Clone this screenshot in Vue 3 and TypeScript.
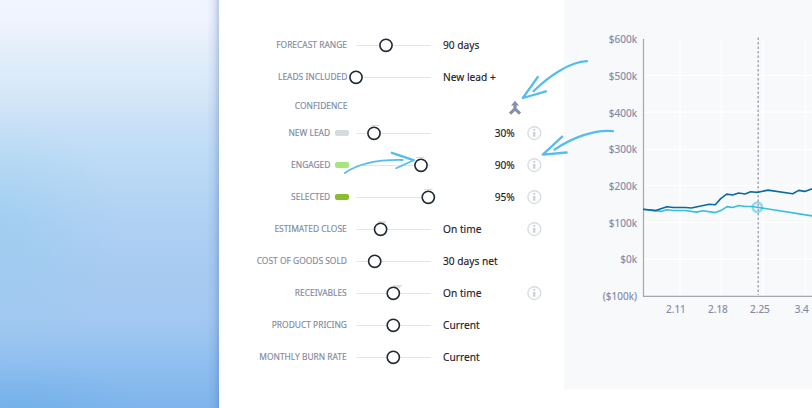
<script setup lang="ts">
interface Setting {
  label: string
  value?: string
  thumb?: number
  tone?: 'gray' | 'lime' | 'green'
  percent?: boolean
  info?: boolean
  ghost?: 'bar' | 'wedge'
  ghostX?: number
}

const settings: Setting[] = [
  { label: 'FORECAST RANGE', value: '90 days', thumb: 30 },
  { label: 'LEADS INCLUDED', value: 'New lead +', thumb: 0 },
  { label: 'CONFIDENCE' },
  { label: 'NEW LEAD', value: '30%', thumb: 18, tone: 'gray', percent: true, info: true, ghost: 'bar', ghostX: 19 },
  { label: 'ENGAGED', value: '90%', thumb: 65, tone: 'lime', percent: true, info: true, ghost: 'bar', ghostX: 64 },
  { label: 'SELECTED', value: '95%', thumb: 72.3, tone: 'green', percent: true, info: true, ghost: 'bar', ghostX: 72.5 },
  { label: 'ESTIMATED CLOSE', value: 'On time', thumb: 24.6, info: true, ghost: 'wedge', ghostX: 27 },
  { label: 'COST OF GOODS SOLD', value: '30 days net', thumb: 18.7 },
  { label: 'RECEIVABLES', value: 'On time', thumb: 37.3, info: true, ghost: 'wedge', ghostX: 42.5 },
  { label: 'PRODUCT PRICING', value: 'Current', thumb: 37.3 },
  { label: 'MONTHLY BURN RATE', value: 'Current', thumb: 37.3 },
]

const yTicks = ['$600k', '$500k', '$400k', '$300k', '$200k', '$100k', '$0k', '($100k)']
const xTicks = ['2.11', '2.18', '2.25', '3.4']
const gridX = [37, 78.3, 120, 162.2]
const gridY = [36.5, 73.2, 110.4, 146.5, 183.5, 220.2]

const upper =
  '0,170.2 12.7,171.6 24,167.8 30.3,168.5 42.3,168.5 48.3,169 66.3,165.2 72.3,165.8 77.7,159.6 83.7,155.1 89.7,156 95.7,154 102,155 107.7,152.8 114.3,153.4 125,151.1 149.7,154.7 155.7,151.4 161.7,152.4 170,149.6'
const lower =
  '0,170.2 18,172.4 23.7,170.7 30.3,171.5 42.3,171.5 53.7,173.1 59.7,171.8 72.3,173.6 78,171.6 84,167.6 89.7,168.5 95.7,166.5 102,167.5 109,167.5 114.3,168.3 170,177'
</script>

<template>
  <div class="page">
    <aside class="sky"></aside>

    <section class="settings">
      <div v-for="s in settings" :key="s.label" class="row" :class="{ heading: s.thumb === undefined }">
        <div class="label" :class="{ tagged: s.tone }">
          <span class="name">{{ s.label }}</span>
          <i v-if="s.tone" class="chip" :class="s.tone"></i>
        </div>
        <svg v-if="s.thumb !== undefined" class="slider" width="91" height="20" viewBox="-8 -10 91 20">
          <path class="track" d="M0 .5H75" />
          <path v-if="s.ghost === 'bar'" class="ghost" :d="`M${s.ghostX! - 4} -7.5h8`" />
          <path v-if="s.ghost === 'wedge'" class="wedge" :d="`M${s.ghostX! - 5} -8h9l-3 3h-6z`" />
          <circle class="thumb" :cx="s.thumb" cy=".3" r="6.1" />
        </svg>
        <div v-if="s.value" class="value" :class="{ percent: s.percent }"><span>{{ s.value }}</span></div>
        <svg v-if="s.info" class="info" width="16" height="16" viewBox="0 0 16 16">
          <circle cx="8.3" cy="8.1" r="6.4" />
          <path d="M7.3 4.1h2v2h-2zM6.9 7.1h2.6v4.6H6.9z" />
        </svg>
        <svg v-if="s.thumb === undefined" class="merge" width="14" height="16" viewBox="0 0 14 16">
          <path d="M7 .8 11 5.4H8.6V8.2L13.1 12.4 10.9 14.7 7 11 3.1 14.7.9 12.4 5.4 8.2V5.4H3z" />
        </svg>
      </div>
    </section>

    <section class="chart">
      <div class="y-axis">
        <div v-for="t in yTicks" :key="t" class="tick"><span>{{ t }}</span></div>
      </div>
      <div class="plot-area">
        <svg class="plot" width="170" height="262" viewBox="-1 -3 170 262">
          <path v-for="x in gridX" :key="'x' + x" class="grid" :d="`M${x} 0V257`" />
          <path v-for="y in gridY" :key="'y' + y" class="grid" :d="`M0 ${y}H170`" />
          <path class="axis" d="M.5 0V257.4H170" />
          <path class="marker" d="M115.2 -1.5V256" />
          <polyline class="lower" :points="lower" />
          <polyline class="upper" :points="upper" />
          <circle class="dot" cx="114.4" cy="168.3" r="4.7" />
        </svg>
        <div class="x-axis">
          <div v-for="t in xTicks" :key="t" class="x-tick"><span>{{ t }}</span></div>
        </div>
      </div>
    </section>

    <svg class="notes" width="812" height="408" viewBox="0 0 812 408">
      <path d="M587 61.2C570 62 550 75 533.5 91.2" />
      <path d="M537.8 77 522.8 98 546 91.4" />
      <path d="M613 131.1C595 129 572 138 554.5 149.6" />
      <path d="M562.2 136.6 542.8 154.6 566.6 152.5" />
      <path class="thin" d="M344.8 173C358 164 379 159.5 402.6 160" />
      <path d="M391.8 152.8 413.6 160.2" />
      <path class="thin" d="M413.6 160.2 396.2 168.2" />
    </svg>
  </div>
</template>

<style>
body {
  margin: 0;
  background: #fff;
}
</style>

<style scoped>
.page {
  position: relative;
  display: flex;
  width: 812px;
  height: 408px;
  overflow: hidden;
  background: #fff;
  font-family: 'Noto Sans', 'Open Sans', sans-serif;
}
.sky {
  width: 219px;
  flex: none;
  background:
    linear-gradient(to left, rgba(70, 105, 180, 0.32), rgba(70, 105, 180, 0.1) 5px, transparent 12px),
    linear-gradient(to bottom, #f1f5ff 0, rgba(241, 245, 255, 0) 45px),
    radial-gradient(ellipse 120px 120px at 0 230px, rgba(130, 200, 235, 0.32), rgba(130, 200, 235, 0.12) 55%, rgba(130, 200, 235, 0)),
    radial-gradient(ellipse 130px 45px at 20px 408px, rgba(100, 172, 228, 0.4), rgba(100, 172, 228, 0)),
    linear-gradient(to bottom, #f0f5ff 0, #e8f0fb 35px, #d9eaf8 82px, #c9e0f7 125px, #bbdaf5 165px, #b0d1f3 220px, #a8cbf2 270px, #a3c8f1 320px, #91c0f0 358px, #7fb5ec 408px);
}
.settings {
  width: 345px;
  flex: none;
  box-sizing: border-box;
  padding-top: 29px;
}
.row {
  display: grid;
  grid-template-columns: 130px 91px 76px 16px;
  height: 32px;
  align-items: center;
}
.row.heading {
  height: 24px;
}
.label {
  display: flex;
  align-items: center;
  justify-content: flex-end;
  gap: 4px;
  color: #7f899f;
  font-size: 9.5px;
  line-height: 14px;
  white-space: nowrap;
  -webkit-text-stroke: 0.15px #7f899f;
}
.name {
  display: inline-block;
  margin-right: 2px;
  transform: translateY(0.4px) scaleX(0.885);
  transform-origin: right center;
}
.heading .name {
  transform: translateY(1px) scaleX(0.885);
}
.tagged .name {
  margin-right: 0.5px;
}
.chip {
  width: 14px;
  height: 6px;
  border-radius: 2px;
}
.gray {
  background: #d5d9e0;
}
.lime {
  background: #a4e67c;
}
.green {
  background: #88bd2c;
}
.slider {
  display: block;
  margin-left: -1px;
  overflow: visible;
}
.track {
  stroke: #e1e4ea;
  stroke-width: 1.2;
}
.ghost {
  stroke: #d6d9e2;
  stroke-width: 1;
}
.wedge {
  fill: #dcdfe9;
}
.thumb {
  fill: #fff;
  stroke: #202936;
  stroke-width: 1.6;
}
.value {
  padding-left: 3px;
  color: #1f2023;
  font-size: 11px;
  line-height: 16px;
  white-space: nowrap;
  -webkit-text-stroke: 0.15px #1f2023;
}
.value span {
  display: inline-block;
  transform: translateY(0.4px) scaleX(0.925);
  transform-origin: left center;
}
.value.percent {
  padding: 0 1px 0 0;
  text-align: right;
}
.value.percent span {
  transform-origin: right center;
}
.info {
  margin-left: 10px;
}
.info circle {
  fill: none;
  stroke: #d9dce5;
  stroke-width: 1.4;
}
.info path {
  fill: #cfd3de;
}
.merge {
  grid-column: 3;
  justify-self: end;
  margin-top: 6px;
  margin-right: -6px;
}
.merge path {
  fill: #8790ab;
}
.chart {
  display: flex;
  width: 248px;
  height: 389px;
  flex: none;
  background: #f8f9fb;
}
.y-axis {
  display: grid;
  grid-template-rows: repeat(8, 36.7px);
  width: 73px;
  padding-top: 20.5px;
  color: #838ba8;
  font-size: 11px;
  text-align: right;
  flex: none;
  -webkit-text-stroke: 0.15px #838ba8;
}
.tick {
  display: grid;
  align-items: center;
}
.tick span {
  transform: scaleX(0.91);
  transform-origin: right center;
}
.plot-area {
  padding-top: 36px;
  padding-left: 5px;
}
.plot {
  display: block;
}
.grid {
  stroke: #fff;
  stroke-width: 1.2;
}
.axis {
  fill: none;
  stroke: #a6a7ae;
  stroke-width: 1.2;
}
.marker {
  stroke: #9295a8;
  stroke-width: 1.2;
  stroke-dasharray: 2.5 2;
}
.upper,
.lower {
  fill: none;
  stroke: #096b9d;
  stroke-width: 1.6;
  stroke-linejoin: round;
}
.lower {
  stroke: #34bfdc;
}
.dot {
  fill: none;
  stroke: rgba(52, 185, 220, 0.5);
  stroke-width: 2.6;
}
.x-axis {
  display: grid;
  grid-template-columns: repeat(4, 41.8px);
  margin-left: 13.5px;
  padding-top: 3px;
  color: #838ba8;
  font-size: 11px;
  line-height: 15px;
  text-align: center;
  -webkit-text-stroke: 0.15px #838ba8;
}
.x-tick span {
  display: inline-block;
  transform: scaleX(0.91);
}
.notes {
  position: absolute;
  inset: 0;
  pointer-events: none;
}
.notes path {
  fill: none;
  stroke: #55bdec;
  stroke-width: 2.3;
  stroke-linecap: round;
  stroke-linejoin: round;
}
.notes .thin {
  stroke-width: 1.8;
}
</style>
